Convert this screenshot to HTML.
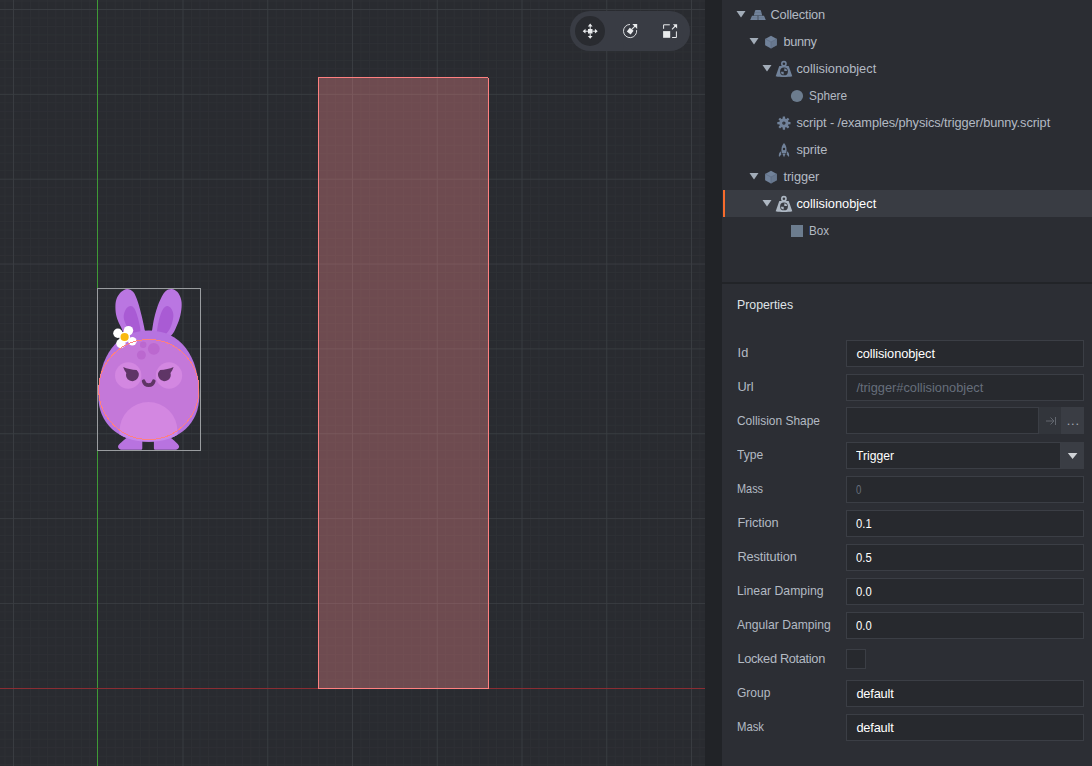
<!DOCTYPE html>
<html><head><meta charset="utf-8"><title>Defold Editor</title>
<style>
html,body{margin:0;padding:0;background:#212327;overflow:hidden}
body{width:1092px;height:766px;position:relative;font-family:"Liberation Sans",sans-serif;font-size:12.800px;color:#b3bac3}
b{font-weight:normal}
#scene{position:absolute;left:0;top:0;width:705px;height:766px;background:#292b30;overflow:hidden}
#scene svg{position:absolute;left:0;top:0;shape-rendering:crispEdges}
#scene svg.smooth{shape-rendering:auto}
#tb{position:absolute;left:570px;top:11px;width:120px;height:40px;border-radius:20px;background:#393c44}
#tb .act{position:absolute;left:5px;top:5px;width:30px;height:30px;border-radius:15px;background:#292b30}
#tb svg{position:absolute;top:0;left:0;shape-rendering:auto}
#panel{position:absolute;left:722px;top:0;width:370px;height:766px;background:#2b2d33}
#outline{position:absolute;left:0;top:0;width:370px;height:282px;background:#2b2d33;overflow:hidden}
#sep{position:absolute;left:0;top:282px;width:370px;height:2px;background:#222428}
#props{position:absolute;left:0;top:284px;width:370px;height:482px;background:#2c2e34}
.row{position:absolute;left:1px;width:369px;height:27px;line-height:27px;white-space:nowrap}
.row.sel{background:#393c43;color:#fff;box-shadow:inset 2px 0 0 #f76b2c}
.arr{position:absolute;top:10px}
.icw{position:absolute;top:6px;width:16px;height:16px;margin-left:-1px}
.ic{width:16px;height:16px;display:block;overflow:visible}
.lbl{position:absolute;top:0;margin-left:-0.600px}
.ptitle{position:absolute;left:15.400px;top:297px;color:#dfe3e8;line-height:16px}
.prow{position:absolute;left:0;width:370px;height:27px;line-height:27px}
.plab{position:absolute;left:15.400px;top:-1px;white-space:nowrap}
.inp{position:absolute;left:124px;top:0;width:238px;height:27px;box-sizing:border-box;border:1px solid #3b3e45;background:#27292e;color:#fff;padding-left:9.400px;line-height:25px;white-space:nowrap}
.inp.dis{color:#666e7b}
.btn{position:absolute;top:0;height:27px;width:23px}
.btn svg{display:block}
.b1{left:317px;width:22px;background:#32353b}
.b2{left:339px;background:#3a3d44}
.dots{box-sizing:border-box;padding-left:5.800px;letter-spacing:0.750px;color:#a3aab3;line-height:27px;white-space:nowrap;overflow:hidden}
.chk{position:absolute;left:124px;top:3px;width:20px;height:20px;box-sizing:border-box;border:1px solid #3b3e45;background:#27292e}
</style></head><body>
<div id="scene">
<svg width="705" height="766" viewBox="0 0 705 766">
<g shape-rendering="geometricPrecision" fill="none" stroke-width="0.900"><path d="M5.03 0V766M21.98 0V766M30.45 0V766M38.93 0V766M47.4 0V766M55.88 0V766M64.35 0V766M72.83 0V766M81.3 0V766M89.78 0V766M106.72 0V766M115.2 0V766M123.67 0V766M132.15 0V766M140.62 0V766M149.1 0V766M157.57 0V766M166.05 0V766M174.52 0V766M191.47 0V766M199.95 0V766M208.43 0V766M216.9 0V766M225.38 0V766M233.85 0V766M242.32 0V766M250.8 0V766M259.27 0V766M276.23 0V766M284.7 0V766M293.17 0V766M301.65 0V766M310.12 0V766M318.6 0V766M327.07 0V766M335.55 0V766M344.02 0V766M360.97 0V766M369.45 0V766M377.93 0V766M386.4 0V766M394.88 0V766M403.35 0V766M411.82 0V766M420.3 0V766M428.77 0V766M445.72 0V766M454.2 0V766M462.68 0V766M471.15 0V766M479.62 0V766M488.1 0V766M496.57 0V766M505.05 0V766M513.52 0V766M530.47 0V766M538.95 0V766M547.42 0V766M555.9 0V766M564.38 0V766M572.85 0V766M581.33 0V766M589.8 0V766M598.27 0V766M615.23 0V766M623.7 0V766M632.17 0V766M640.65 0V766M649.12 0V766M657.6 0V766M666.07 0V766M674.55 0V766M683.02 0V766M699.98 0V766M0 764.66H705M0 756.18H705M0 747.69H705M0 739.21H705M0 730.72H705M0 722.24H705M0 713.75H705M0 705.27H705M0 696.78H705M0 679.81H705M0 671.33H705M0 662.84H705M0 654.36H705M0 645.88H705M0 637.39H705M0 628.9H705M0 620.42H705M0 611.93H705M0 594.96H705M0 586.48H705M0 578H705M0 569.51H705M0 561.02H705M0 552.54H705M0 544.05H705M0 535.57H705M0 527.09H705M0 510.11H705M0 501.63H705M0 493.14H705M0 484.66H705M0 476.17H705M0 467.69H705M0 459.2H705M0 450.72H705M0 442.23H705M0 425.26H705M0 416.78H705M0 408.29H705M0 399.81H705M0 391.32H705M0 382.84H705M0 374.35H705M0 365.87H705M0 357.38H705M0 340.41H705M0 331.93H705M0 323.44H705M0 314.96H705M0 306.47H705M0 297.99H705M0 289.5H705M0 281.02H705M0 272.53H705M0 255.56H705M0 247.08H705M0 238.59H705M0 230.11H705M0 221.62H705M0 213.14H705M0 204.65H705M0 196.17H705M0 187.69H705M0 170.72H705M0 162.23H705M0 153.75H705M0 145.26H705M0 136.77H705M0 128.29H705M0 119.8H705M0 111.32H705M0 102.84H705M0 85.87H705M0 77.38H705M0 68.89H705M0 60.41H705M0 51.92H705M0 43.44H705M0 34.96H705M0 26.47H705M0 17.99H705M0 1.01H705" stroke="#2f3136"/>
<path d="M13.5 0V766M183 0V766M267.75 0V766M352.5 0V766M437.25 0V766M522 0V766M606.75 0V766M691.5 0V766M0 603.45H705M0 518.6H705M0 433.75H705M0 348.9H705M0 264.05H705M0 179.2H705M0 94.35H705M0 9.5H705" stroke="#3b3e43"/></g>
<path d="M97.500 0V766" stroke="#3f9a36" stroke-width="1"/>
<path d="M0 688.500H705" stroke="#8b2d33" stroke-width="1"/>
<rect x="319" y="78" width="169" height="610" fill="rgba(250,142,145,0.335)"/>
<path d="M318.500 689V77.500H488M488.500 78V688.500H318" fill="none" stroke="#ff8080" stroke-width="1"/>
</svg>
<svg class="smooth" width="705" height="766" viewBox="0 0 705 766">
<g>
<path d="M127.2 288.9C125.2 288.9 122.8 290.3 121.0 292.0C119.2 293.7 117.4 296.5 116.5 299.0C115.6 301.5 115.4 304.2 115.4 307.2C115.4 310.2 115.8 313.9 116.7 317.2C117.7 320.5 119.2 323.7 121.1 327.2C123.0 330.7 123.8 336.2 128.0 338.0C132.2 339.8 143.2 339.4 146.0 338.0C148.8 336.6 145.3 333.0 144.6 329.4C143.9 325.8 142.8 320.7 141.7 316.1C140.6 311.5 139.2 305.7 137.8 301.7C136.4 297.7 135.1 294.1 133.3 292.0C131.5 289.9 129.2 288.9 127.2 288.9z" fill="#ba76e2"/>
<path d="M171.7 288.9C173.8 288.9 175.9 290.3 177.5 292.0C179.1 293.7 180.3 296.5 181.0 299.0C181.7 301.5 181.8 304.0 181.6 307.2C181.4 310.4 180.7 314.6 179.6 318.3C178.5 322.0 176.7 326.4 175.2 329.4C173.7 332.4 173.1 333.5 170.6 336.1C168.1 338.7 163.3 344.7 160.0 345.0C156.7 345.3 152.3 340.6 151.0 338.0C149.7 335.4 151.6 332.9 152.2 329.4C152.8 325.9 153.3 321.6 154.4 317.2C155.5 312.8 157.1 307.1 158.9 302.8C160.7 298.6 162.9 294.0 165.0 291.7C167.1 289.4 169.6 288.8 171.7 288.9z" fill="#ba76e2"/>
<path d="M130.6 306.0C129.3 306.2 127.2 307.1 126.0 309.0C124.8 310.9 123.5 314.2 123.7 317.2C123.9 320.2 125.7 324.2 127.2 327.2C128.8 330.2 131.1 333.3 133.0 335.0C134.9 336.7 137.6 337.7 138.9 337.4C140.2 337.1 140.5 335.2 140.6 333.0C140.7 330.8 140.1 327.1 139.4 323.9C138.8 320.7 137.6 316.5 136.7 313.9C135.8 311.2 135.0 309.3 134.0 308.0C133.0 306.7 131.9 305.8 130.6 306.0z" fill="#a95bd4"/>
<path d="M167.2 306.0C168.6 305.9 170.5 307.3 171.5 309.0C172.5 310.7 173.6 313.1 173.4 316.1C173.2 319.1 172.1 324.0 170.6 327.2C169.1 330.4 166.4 333.7 164.5 335.5C162.6 337.3 160.2 338.4 158.9 338.2C157.7 337.9 157.3 335.5 157.0 334.0C156.7 332.5 156.8 332.0 157.2 329.4C157.6 326.8 158.5 321.6 159.4 318.3C160.3 315.0 161.5 311.4 162.8 309.4C164.1 307.3 165.8 306.1 167.2 306.0z" fill="#a95bd4"/>
<path d="M127 437.5C123 441 118.5 444 118 446.5C118 449 120 449.8 123 449.8H140.800C142 449.800 142.300 449 142.300 448V438z" fill="#b873e0"/>
<path d="M170.500 437.5C174.500 441 178.700 444 179.100 446.500C179.100 449 177 449.800 174 449.800H155.400C154.200 449.800 153.900 449 153.900 448V438z" fill="#b873e0"/>
<path d="M148.8 330.5C180.1 330.5 199.3 355.4 199.3 396C199.3 423.5 179.1 441.8 148.8 441.8C118.5 441.8 98.30000000000001 423.5 98.30000000000001 396C98.30000000000001 355.4 117.5 330.5 148.8 330.5z" fill="#b673e0"/>
<clipPath id="bclip"><path d="M148.8 330.5C180.1 330.5 199.3 355.4 199.3 396C199.3 423.5 179.1 441.8 148.8 441.8C118.5 441.8 98.30000000000001 423.5 98.30000000000001 396C98.30000000000001 355.4 117.5 330.5 148.8 330.5z"/></clipPath>
<g clip-path="url(#bclip)" fill="#c886ea">
<circle cx="128.200" cy="375.500" r="13.200"/>
<circle cx="169" cy="375.500" r="13.200"/>
<path d="M119.500 445V431A29 29 0 0 1 177.500 431V445z"/>
</g>
<circle cx="143.200" cy="344.700" r="3.200" fill="#aa5fd4"/>
<circle cx="153.800" cy="348.800" r="5.900" fill="#aa5fd4"/>
<circle cx="141.400" cy="355" r="4.500" fill="#aa5fd4"/>
<circle cx="148.800" cy="389.500" r="49.700" fill="rgba(255,140,190,0.200)"/>
<path d="M123.2 367C127 368.700 132 369.700 136.600 370.100A6.300 6.300 0 1 1 126.300 373C125.300 371.500 124 369.500 123.200 367z" fill="#5f3566"/>
<path d="M123.2 367C127 368.700 132 369.700 136.600 370.100A6.300 6.300 0 1 1 126.300 373C125.300 371.500 124 369.500 123.200 367z" fill="#5f3566" transform="translate(296.800 0) scale(-1 1)"/>
<path d="M143.600 381.200C144.400 384 146.400 385.100 148.700 385.100S153 384 153.800 381.200" fill="none" stroke="#5f3566" stroke-width="3.600" stroke-linecap="round"/>
<g fill="#ffffff">
<circle cx="128.500" cy="330.600" r="4.700"/>
<circle cx="117.900" cy="333.300" r="4.700"/>
<circle cx="120.900" cy="343.500" r="4.700"/>
<circle cx="132.400" cy="341.200" r="4.200"/>
<circle cx="124.600" cy="337" r="5.500"/>
</g>
<circle cx="124.600" cy="337" r="4.100" fill="#f9b90f"/>
</g>
<circle cx="148.800" cy="389.500" r="50" fill="none" stroke="#ff8080" stroke-width="1" shape-rendering="crispEdges"/>
<rect x="97.500" y="288.500" width="103" height="162" fill="none" stroke="#9a9da0" stroke-width="1" shape-rendering="crispEdges"/>

</svg>
<div id="tb"><div class="act"></div>
<svg width="120" height="40" viewBox="0 0 120 40">
<g fill="#e9ebed" stroke="none">
<rect x="18" y="18" width="4.500" height="4.500"/>
<path d="M20.200 12.600l2.400 2.800h-4.800zM20.200 27.800l2.400-2.800h-4.800zM12.700 20.200l2.800-2.400v4.800zM27.700 20.200l-2.800-2.400v4.800z"/>
<rect x="19.700" y="15" width="1" height="3"/><rect x="19.700" y="22.500" width="1" height="3"/><rect x="15" y="19.700" width="3" height="1"/><rect x="22.500" y="19.700" width="3" height="1"/>
</g>
<g>
<path d="M60 13.450A6.600 6.600 0 1 0 66.600 19.100" fill="none" stroke="#e9ebed" stroke-width="0.900"/>
<path d="M62.300 13h4.900v4.900z" fill="#e9ebed"/>
<path d="M61.500 18.700l4-4" stroke="#e9ebed" stroke-width="1.100"/>
<rect x="57.800" y="17.700" width="4.800" height="4.800" transform="rotate(38 60.200 20.100)" fill="#e9ebed"/>
</g>
<g>
<rect x="93.100" y="20.100" width="7.100" height="6.700" fill="#e9ebed"/>
<path d="M93.600 17.800V13.800H99.800M106.400 20.400v6.100h-4.300" fill="none" stroke="#e9ebed" stroke-width="1"/>
<path d="M102.900 13.200h4.200v4.200z" fill="#e9ebed"/><path d="M102 18.300l3.800-3.800" stroke="#e9ebed" stroke-width="1.100"/>
</g>
</svg></div>
</div>
<div id="panel">
<div id="outline">
<div class="row" style="top:1px"><svg class="arr" style="left:13px" width="10" height="8" viewBox="0 0 10 8"><path d="M0.500 0.100h9L5 6.400z" fill="#a2acb8"/></svg><span class="icw" style="left:28px"><svg class="ic" viewBox="0 0 16 16"><path d="M6 3h4c.5 0 .8 .2 .9 .600l1.300 4.900H3.800l1.300-4.900c.1-.4 .4-.6 .9-.6z" fill="#71829a"/><path d="M2 8.800h5.700V13H0.200zM8.300 8.800h5.700l1.800 4.200H8.300z" fill="#71829a"/><path d="M4.600 5.500h6.800M1.300 10.800h13.400" stroke="#5d6c82" stroke-width="0.500" fill="none" opacity="0.700"/></svg></span><span class="lbl" style="left:48px"><b id="o0" style="letter-spacing:-0.16px">Collection</b></span></div>
<div class="row" style="top:28px"><svg class="arr" style="left:26px" width="10" height="8" viewBox="0 0 10 8"><path d="M0.500 0.100h9L5 6.400z" fill="#a2acb8"/></svg><span class="icw" style="left:41px"><svg class="ic" viewBox="0 0 16 16"><path d="M8 1.800l5.900 3.100v6.300L8 14.400 2.100 11.200V4.900z" fill="#71829a"/><path d="M8 8v6.400l5.900-3.200V4.900z" fill="#5d6c82" opacity="0.450"/><path d="M2.100 4.900L8 8l5.900-3.100M8 8v6.400" stroke="#5d6c82" stroke-width="0.700" fill="none"/></svg></span><span class="lbl" style="left:61px"><b id="o1" style="letter-spacing:-0.35px">bunny</b></span></div>
<div class="row" style="top:55px"><svg class="arr" style="left:39px" width="10" height="8" viewBox="0 0 10 8"><path d="M0.500 0.100h9L5 6.400z" fill="#a2acb8"/></svg><span class="icw" style="left:54px"><svg class="ic" viewBox="0 0 16 16"><circle cx="7.900" cy="2.700" r="2.100" fill="none" stroke="#71829a" stroke-width="1.600"/><path d="M3.300 5h9.400l3.600 10.300c-2.600 .7-5.400 .7-8.300 .7s-5.700 0-8.300-.7z" fill="#71829a"/><circle cx="8" cy="10.400" r="3.900" fill="#2b2d33"/><path d="M8.300 7.200a3.200 3.200 0 0 1 2.900 2.900H8.300zM7.700 13.600a3.200 3.200 0 0 1-2.900-2.900H7.700z" fill="#71829a"/></svg></span><span class="lbl" style="left:74px"><b id="o2" style="letter-spacing:0.01px">collisionobject</b></span></div>
<div class="row" style="top:82px"><span class="icw" style="left:67px"><svg class="ic" viewBox="0 0 16 16"><circle cx="8" cy="8" r="6.100" fill="#6c7c8e"/></svg></span><span class="lbl" style="left:87px"><b id="o3" style="display:inline-block;transform:scaleX(0.924);transform-origin:0 50%">Sphere</b></span></div>
<div class="row" style="top:109px"><span class="icw" style="left:54px"><svg class="ic" viewBox="0 0 16 16"><g fill="#71829a"><path d="M6.500 4.600l.3-3.100h2.200l.3 3.100z" transform="rotate(0 7.900 8.100)"/><path d="M6.500 4.600l.3-3.100h2.200l.3 3.100z" transform="rotate(45 7.900 8.100)"/><path d="M6.500 4.600l.3-3.100h2.200l.3 3.100z" transform="rotate(90 7.900 8.100)"/><path d="M6.500 4.600l.3-3.100h2.200l.3 3.100z" transform="rotate(135 7.900 8.100)"/><path d="M6.500 4.600l.3-3.100h2.200l.3 3.100z" transform="rotate(180 7.900 8.100)"/><path d="M6.500 4.600l.3-3.100h2.200l.3 3.100z" transform="rotate(225 7.900 8.100)"/><path d="M6.500 4.600l.3-3.100h2.200l.3 3.100z" transform="rotate(270 7.900 8.100)"/><path d="M6.500 4.600l.3-3.100h2.200l.3 3.100z" transform="rotate(315 7.900 8.100)"/></g><circle cx="7.900" cy="8.100" r="3.150" fill="none" stroke="#71829a" stroke-width="2.900"/><circle cx="7.900" cy="8.100" r="0.500" fill="#71829a" opacity="0.600"/></svg></span><span class="lbl" style="left:74px"><b id="o4" style="letter-spacing:-0.09px">script - /examples/physics/trigger/bunny.script</b></span></div>
<div class="row" style="top:136px"><span class="icw" style="left:54px"><svg class="ic" viewBox="0 0 16 16"><path d="M8 1c2.300 2.400 3.100 5.600 2.300 10H5.700C4.900 6.600 5.700 3.400 8 1z" fill="#71829a"/><circle cx="8" cy="7" r="1.200" fill="#2b2d33"/><path d="M4.700 9.200C3 10.700 2.500 12.700 3 15l2.400-2.600zM11.300 9.200c1.700 1.500 2.200 3.500 1.700 5.800l-2.400-2.600z" fill="#71829a"/><path d="M6.300 11.600h3.400L8 15.200z" fill="#71829a"/></svg></span><span class="lbl" style="left:74px"><b id="o5" style="letter-spacing:-0.06px">sprite</b></span></div>
<div class="row" style="top:163px"><svg class="arr" style="left:26px" width="10" height="8" viewBox="0 0 10 8"><path d="M0.500 0.100h9L5 6.400z" fill="#a2acb8"/></svg><span class="icw" style="left:41px"><svg class="ic" viewBox="0 0 16 16"><path d="M8 1.800l5.900 3.100v6.300L8 14.400 2.100 11.200V4.900z" fill="#71829a"/><path d="M8 8v6.400l5.900-3.200V4.900z" fill="#5d6c82" opacity="0.450"/><path d="M2.100 4.900L8 8l5.900-3.100M8 8v6.400" stroke="#5d6c82" stroke-width="0.700" fill="none"/></svg></span><span class="lbl" style="left:61px"><b id="o6" style="letter-spacing:-0.05px">trigger</b></span></div>
<div class="row sel" style="top:190px"><svg class="arr" style="left:39px" width="10" height="8" viewBox="0 0 10 8"><path d="M0.500 0.100h9L5 6.400z" fill="#aeb7c2"/></svg><span class="icw" style="left:54px"><svg class="ic" viewBox="0 0 16 16"><circle cx="7.900" cy="2.700" r="2.100" fill="none" stroke="#adb7c3" stroke-width="1.600"/><path d="M3.300 5h9.400l3.600 10.300c-2.600 .7-5.400 .7-8.300 .7s-5.700 0-8.300-.7z" fill="#adb7c3"/><circle cx="8" cy="10.400" r="3.900" fill="#393c43"/><path d="M8.300 7.200a3.200 3.200 0 0 1 2.900 2.900H8.300zM7.700 13.600a3.200 3.200 0 0 1-2.900-2.900H7.700z" fill="#adb7c3"/></svg></span><span class="lbl" style="left:74px"><b id="o7" style="letter-spacing:0.01px">collisionobject</b></span></div>
<div class="row" style="top:217px"><span class="icw" style="left:67px"><svg class="ic" viewBox="0 0 16 16" shape-rendering="crispEdges"><rect x="2" y="2" width="12" height="12" fill="#6c7c8e"/></svg></span><span class="lbl" style="left:87px"><b id="o8" style="display:inline-block;transform:scaleX(0.909);transform-origin:0 50%">Box</b></span></div>
</div>
<div id="sep"></div>
<div id="props"></div>
<div class="ptitle"><b id="pt" style="display:inline-block;transform:scaleX(0.962);transform-origin:0 50%">Properties</b></div>
<div class="prow" style="top:340px"><span class="plab"><b id="l0" style="letter-spacing:0.35px">Id</b></span><span class="inp"><b id="v0" style="letter-spacing:-0.08px">collisionobject</b></span></div>
<div class="prow" style="top:374px"><span class="plab"><b id="l1" style="letter-spacing:-0.07px">Url</b></span><span class="inp dis"><b id="v1" style="letter-spacing:0.01px">/trigger#collisionobject</b></span></div>
<div class="prow" style="top:407px"><span class="plab" style="top:0"><b id="l2" style="display:inline-block;transform:scaleX(0.933);transform-origin:0 50%">Collision Shape</b></span><span class="inp" style="width:193px"></span><span class="btn b1"><svg width="22" height="27" viewBox="0 0 22 27"><path d="M7 14h8M11.500 10.500l3.500 3.500-3.500 3.500M16.500 10v8" stroke="#62676f" stroke-width="1" fill="none"/></svg></span><span class="btn b2 dots">...</span></div>
<div class="prow" style="top:442px"><span class="plab"><b id="l3" style="display:inline-block;transform:scaleX(0.945);transform-origin:0 50%">Type</b></span><span class="inp" style="width:215px"><b id="v3" style="display:inline-block;transform:scaleX(0.947);transform-origin:0 50%">Trigger</b></span><span class="btn b2"><svg width="23" height="27" viewBox="0 0 23 27"><path d="M6.800 10.900h9.600l-4.800 6.100z" fill="#cfd2d6"/></svg></span></div>
<div class="prow" style="top:476px"><span class="plab"><b id="l4" style="display:inline-block;transform:scaleX(0.853);transform-origin:0 50%">Mass</b></span><span class="inp dis"><b id="v4" style="display:inline-block;transform:scaleX(0.758);transform-origin:0 50%">0</b></span></div>
<div class="prow" style="top:510px"><span class="plab"><b id="l5" style="letter-spacing:-0.12px">Friction</b></span><span class="inp"><b id="v5" style="display:inline-block;transform:scaleX(0.879);transform-origin:0 50%">0.1</b></span></div>
<div class="prow" style="top:544px"><span class="plab"><b id="l6" style="letter-spacing:-0.10px">Restitution</b></span><span class="inp"><b id="v6" style="display:inline-block;transform:scaleX(0.879);transform-origin:0 50%">0.5</b></span></div>
<div class="prow" style="top:578px"><span class="plab"><b id="l7" style="display:inline-block;transform:scaleX(0.958);transform-origin:0 50%">Linear Damping</b></span><span class="inp"><b id="v7" style="display:inline-block;transform:scaleX(0.879);transform-origin:0 50%">0.0</b></span></div>
<div class="prow" style="top:612px"><span class="plab"><b id="l8" style="display:inline-block;transform:scaleX(0.948);transform-origin:0 50%">Angular Damping</b></span><span class="inp"><b id="v8" style="display:inline-block;transform:scaleX(0.879);transform-origin:0 50%">0.0</b></span></div>
<div class="prow" style="top:646px"><span class="plab"><b id="l9" style="letter-spacing:-0.33px">Locked Rotation</b></span><span class="chk"></span></div>
<div class="prow" style="top:680px"><span class="plab"><b id="l10" style="display:inline-block;transform:scaleX(0.938);transform-origin:0 50%">Group</b></span><span class="inp"><b id="v10" style="letter-spacing:-0.18px">default</b></span></div>
<div class="prow" style="top:714px"><span class="plab"><b id="l11" style="display:inline-block;transform:scaleX(0.883);transform-origin:0 50%">Mask</b></span><span class="inp"><b id="v11" style="letter-spacing:-0.18px">default</b></span></div>
</div>
</body></html>
